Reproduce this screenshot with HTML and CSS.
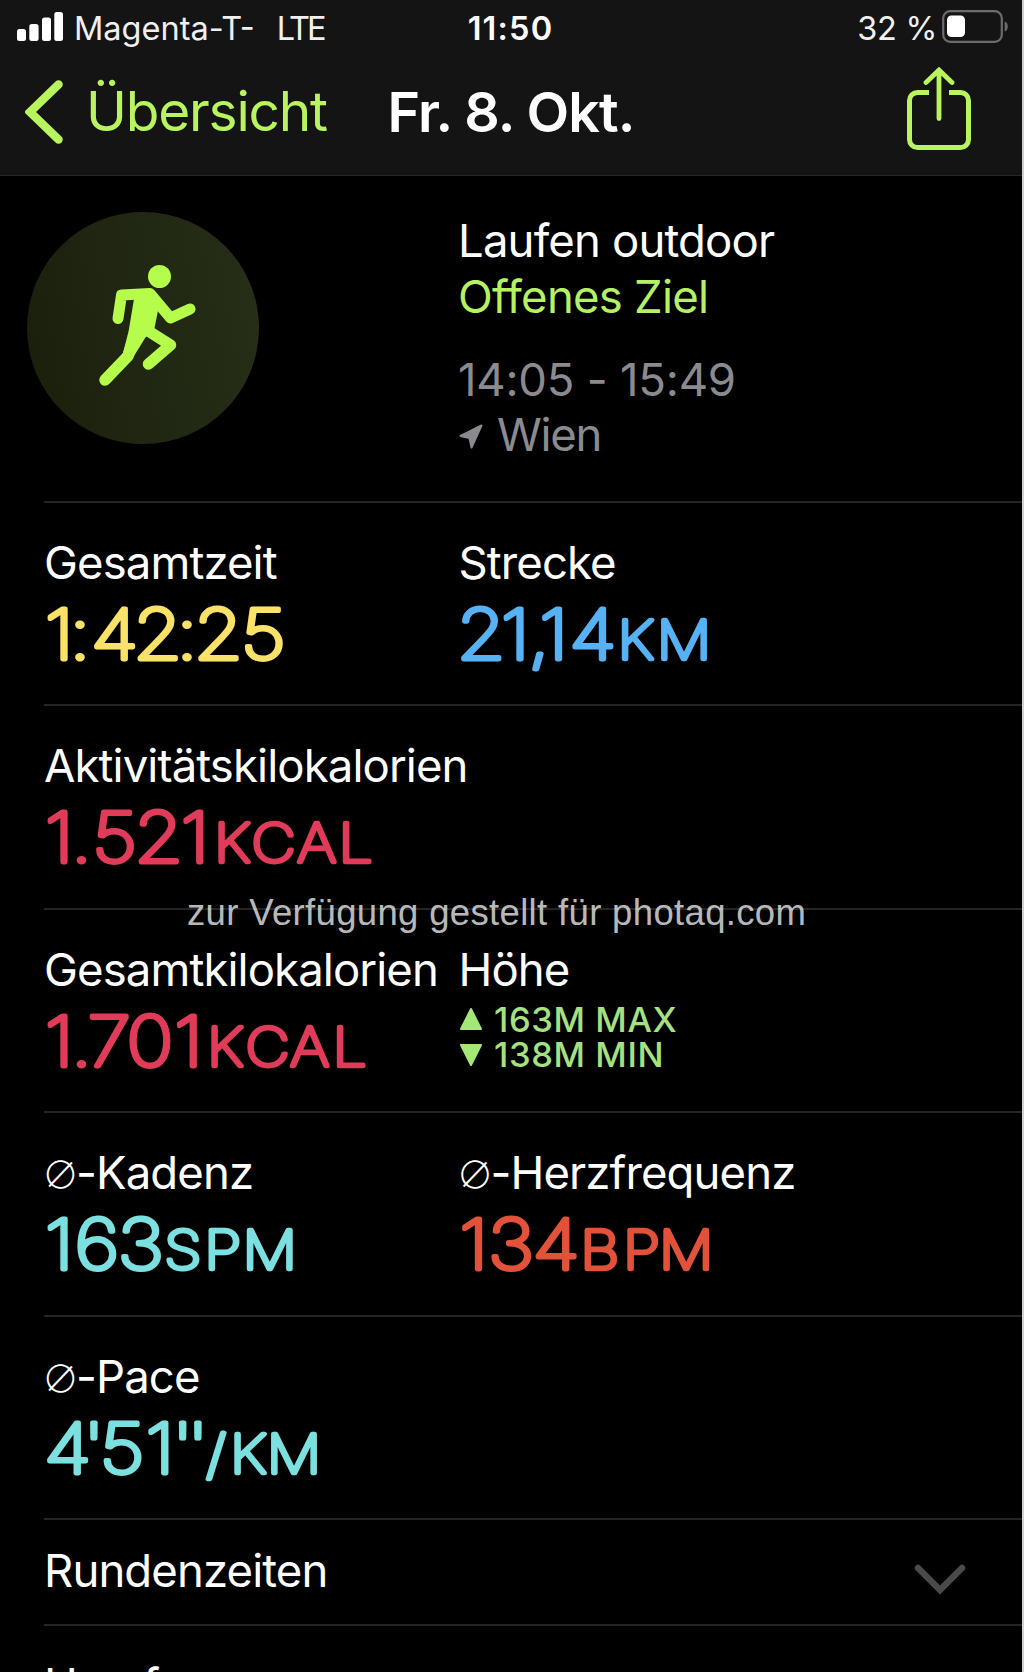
FILE: index.html
```
<!DOCTYPE html>
<html lang="de">
<head>
<meta charset="utf-8">
<title>Training</title>
<link rel="stylesheet" href="styles.css">
</head>
<body>
<div class="screen">
  <header class="header">
    <div class="status">
      <div class="status-left">
        <svg class="signal" width="46" height="29" viewBox="0 0 46 29"><rect x="0" y="17" width="9" height="12" rx="2.5"/><rect x="12.3" y="12" width="9.3" height="17" rx="2.5"/><rect x="25" y="5.5" width="9" height="23.5" rx="2.5"/><rect x="37.3" y="0" width="8.7" height="29" rx="2.5"/></svg>
        <span class="carrier">Magenta-T-</span><span class="network">LTE</span>
      </div>
      <div class="clock">11:50</div>
      <div class="status-right">
        <span>32 %</span>
        <svg class="battery" width="67" height="33" viewBox="0 0 67 33"><rect x="1.2" y="1.2" width="58.6" height="30.6" rx="7" fill="none" stroke="#6c6c6c" stroke-width="2.2"/><rect x="5" y="5.5" width="18" height="21.5" rx="4.5" fill="#fff"/><path d="M62.7 11.5c2.4 1 3 2.5 3 5s-.6 4-3 5z" fill="#6c6c6c"/></svg>
      </div>
    </div>
    <nav class="nav">
      <a class="back">
        <svg width="38" height="64" viewBox="0 0 38 64"><path d="M33.5 4.5 5 32l28.5 27.5" fill="none" stroke="currentColor" stroke-width="8.5" stroke-linecap="round" stroke-linejoin="miter"/></svg>
        <span>Übersicht</span>
      </a>
      <h1 class="title">Fr. 8. Okt.</h1>
      <svg class="share" width="64" height="83" viewBox="0 0 64 83" fill="none" stroke="currentColor" stroke-width="5"><path d="M22 25.5H10.5a8 8 0 0 0-8 8v39a8 8 0 0 0 8 8h43a8 8 0 0 0 8-8v-39a8 8 0 0 0-8-8H42"/><path d="M32 4v47.5M19 15.5 32 3l13 12.5" stroke-linecap="round" stroke-width="4.8"/></svg>
    </nav>
  </header>

  <section class="hero">
    <div class="badge">
      <svg width="232" height="232" viewBox="0 0 232 232" fill="none" stroke="#b5fc4b" stroke-linecap="round" stroke-linejoin="round">
        <circle cx="132.5" cy="64.5" r="11.5" fill="#b5fc4b" stroke="none"/>
        <path d="M91 106.500 94.500 83 123 81.500 143.500 106 163 97" stroke-width="11"/>
        <path d="M109 84 125 81.500 130 96 126 116 117 125 104 146 97 143 103 120Z" fill="#b5fc4b" stroke-width="3"/>
        <path d="M119 87 110 118 101 144 78 168" stroke-width="11.5"/>
        <path d="M115 115 143.500 133 121.500 152" stroke-width="11.5"/>
      </svg>
    </div>
    <div class="summary">
      <p>Laufen outdoor</p>
      <p class="goal">Offenes Ziel</p>
      <p class="time">14:05 - 15:49</p>
      <p class="place"><svg width="24" height="25" viewBox="0 0 24 25"><path d="M22.500 1.500 12.500 23.500 10.500 14 1.500 12Z" fill="currentColor" stroke="currentColor" stroke-width="2" stroke-linejoin="round"/></svg>Wien</p>
    </div>
  </section>

  <main class="list">
    <section class="row">
      <div class="metric"><h2>Gesamtzeit</h2>
        <svg class="value yellow" width="345" height="78" viewBox="0 0 300 78" preserveAspectRatio="none"><text y="66" x="13.4 31.3 61.3 98.9 124.3 151.7 190.7">1:42:25</text></svg></div>
      <div class="metric"><h2>Strecke</h2>
        <svg class="value blue" width="345" height="78" viewBox="0 0 300 78" preserveAspectRatio="none"><text y="66" x="19.3 49 69.8 82.5 116.3">21,14</text><text class="unit" y="66" x="153.7 195.7">KM</text></svg></div>
    </section>
    <section class="row">
      <div class="metric"><h2>Aktivitätskilokalorien</h2>
        <svg class="value red" width="345" height="78" viewBox="0 0 300 78" preserveAspectRatio="none"><text y="66" x="13.4 32.6 61.5 99.6 131.4">1.521</text><text class="unit" y="66" x="163.7 199.7 237.2 270.9">KCAL</text></svg></div>
    </section>
    <section class="row">
      <div class="metric"><h2>Gesamtkilokalorien</h2>
        <svg class="value red" width="345" height="78" viewBox="0 0 300 78" preserveAspectRatio="none"><text y="66" x="13.4 32.6 56.6 92.2 125.8">1.701</text><text class="unit" y="66" x="157.6 194.4 231.1 265.7">KCAL</text></svg></div>
      <div class="metric"><h2>Höhe</h2>
        <p class="altitude"><svg width="24" height="24" viewBox="0 0 24 24"><path d="M12 2 22 22H2Z"/></svg>163M MAX</p>
        <p class="altitude"><svg width="24" height="24" viewBox="0 0 24 24"><path d="M12 22 2 2h20Z"/></svg>138M MIN</p></div>
    </section>
    <section class="row">
      <div class="metric"><h2><span class="avg">∅</span>-Kadenz</h2>
        <svg class="value cyan" width="345" height="78" viewBox="0 0 300 78" preserveAspectRatio="none"><text y="66" x="13.4 46 84.3">163</text><text class="unit" y="66" x="120.9 155.5 196.3">SPM</text></svg></div>
      <div class="metric"><h2><span class="avg">∅</span>-Herzfrequenz</h2>
        <svg class="value orange" width="345" height="78" viewBox="0 0 300 78" preserveAspectRatio="none"><text y="66" x="12.9 45.2 84.5">134</text><text class="unit" y="66" x="122.5 158.6 197.6">BPM</text></svg></div>
    </section>
    <section class="row">
      <div class="metric"><h2><span class="avg">∅</span>-Pace</h2>
        <svg class="value cyan" width="345" height="78" viewBox="0 0 300 78" preserveAspectRatio="none"><text y="66" x="20.6 43.4 68 101 120.6 133.9">4'51''</text><text class="unit" y="66" x="149.6 177.5 217.5">/KM</text></svg></div>
    </section>
    <section class="row fold">
      <h2>Rundenzeiten</h2>
      <svg class="chevron" width="54" height="34" viewBox="0 0 54 34"><path d="M5 5 27 27 49 5" fill="none" stroke="#4a4a4a" stroke-width="6.5" stroke-linecap="round"/></svg>
    </section>
    <section class="row"><h2>Herzfrequenz</h2></section>
  </main>
  <p class="credit">zur Verfügung gestellt für photaq.com</p>
</div>
</body>
</html>
```
FILE: styles.css
```
* { box-sizing: border-box; margin: 0; }
body { background: #d3cfce; font-family: Inter, "Liberation Sans", sans-serif; color: #fff; }
svg { display: block; flex: none; }
.screen { position: relative; width: 1022px; height: 1672px; overflow: hidden; background: #000; }

.header { height: 176px; background: #141414; border-bottom: 1px solid #262626; }
.status { display: grid; grid-template-columns: 1fr auto 1fr; align-items: center; height: 56px; padding: 0 13px 0 17px; font-size: 32.5px; }
.status-left, .status-right { display: flex; align-items: center; color: #f0f0f0; }
.status-right { justify-content: flex-end; gap: 5px; letter-spacing: -.3px; }
.signal { fill: #fff; margin: 0 11px 3px 0; }
.network { margin-left: 22px; letter-spacing: -3px; }
.battery { margin-bottom: 3px; }
.clock { font-weight: 600; letter-spacing: 1.2px; margin-left: -5px; }

.nav { display: grid; grid-template-columns: 1fr auto 1fr; align-items: center; height: 110px; padding: 0 51px 0 25px; font-size: 55px; }
.back { display: flex; align-items: center; gap: 23px; color: #b9f45f; letter-spacing: -1.2px; }
.back svg { margin-top: 1px; }
.title { font-size: 55.5px; font-weight: 600; letter-spacing: -.9px; margin-left: 26px; }
.share { color: #b9f45f; justify-self: end; margin-bottom: 6px; }

.hero { display: grid; grid-template-columns: 431px 1fr; height: 325px; padding: 36px 0 0 27px; }
.badge { width: 232px; height: 232px; border-radius: 50%; background: linear-gradient(80deg, #1a1f0c, #272f18); }
.summary { padding-top: 1px; font-size: 45.5px; line-height: 55.5px; letter-spacing: -.85px; }
.goal { color: #b5f261; letter-spacing: -.75px; }
.time { color: #8b8b8f; margin-top: 27.5px; letter-spacing: -.23px; }
.place { display: flex; align-items: center; gap: 14px; color: #8b8b8f; letter-spacing: -1.3px; }
.place svg { margin: 4px 0 0 1px; }

.list { padding-left: 44px; }
.row { display: grid; grid-template-columns: 414.5px 1fr; height: 203.4px; padding-top: 32px; border-top: 2px solid #242424; }
h2 { font-size: 45.5px; font-weight: 400; line-height: 56.4px; letter-spacing: -.9px; white-space: nowrap; }
.avg { display: inline-block; width: 33px; margin-left: -1px; text-indent: -1px; font-family: "Noto Sans CJK JP", sans-serif; font-weight: 300; font-size: 37px; line-height: 1; letter-spacing: 0; }

/* thin glyphs with a round-joined outline give the rounded numerals */
.value { margin-top: 1.6px; overflow: visible; font-weight: 100; font-size: 69px; stroke-width: 4.8px; stroke-linejoin: round; text-anchor: middle; fill: currentColor; stroke: currentColor; }
.unit { font-size: 53px; stroke-width: 4.5px; }
.yellow { color: #fae167; }
.blue { color: #56b2f4; }
.red { color: #e03c59; }
.cyan { color: #7ce0e0; }
.orange { color: #e2523a; }

.altitude { display: flex; align-items: center; gap: 11.5px; font-size: 34.5px; font-weight: 500; line-height: 35.4px; letter-spacing: .6px; color: #a5e27f; }
h2 + .altitude { margin-top: 3.6px; }
.altitude svg { fill: #a3e875; stroke: #a3e875; stroke-width: 2px; stroke-linejoin: round; }

.fold { height: 106.3px; padding-top: 23px; grid-template-columns: 1fr auto; }
.fold + .row { padding-top: 31px; }
.chevron { margin: 20px 55px 0 0; }

.credit { position: absolute; left: 187px; top: 892px; font: 36.5px/42px "Liberation Sans", sans-serif; letter-spacing: .34px; color: rgba(255, 255, 255, .74); white-space: nowrap; }
```
